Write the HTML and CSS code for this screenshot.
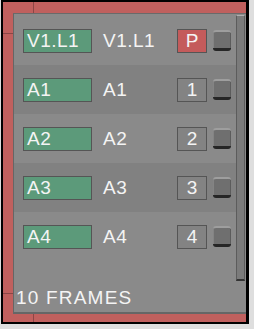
FILE: index.html
```html
<!DOCTYPE html>
<html>
<head>
	<meta charset="utf-8">
	<title>Frames</title>
	<link rel="stylesheet" href="styles.css">
</head>
<body>

<div class="frame">
	<div class="panel">
		<div class="list">
			<div class="row odd">
				<span class="tag">V1.L1</span>
				<span class="name">V1.L1</span>
				<span class="num red">P</span>
				<span class="btn"></span>
			</div>
			<div class="row">
				<span class="tag">A1</span>
				<span class="name">A1</span>
				<span class="num">1</span>
				<span class="btn"></span>
			</div>
			<div class="row odd">
				<span class="tag">A2</span>
				<span class="name">A2</span>
				<span class="num">2</span>
				<span class="btn"></span>
			</div>
			<div class="row">
				<span class="tag">A3</span>
				<span class="name">A3</span>
				<span class="num">3</span>
				<span class="btn"></span>
			</div>
			<div class="row odd">
				<span class="tag">A4</span>
				<span class="name">A4</span>
				<span class="num">4</span>
				<span class="btn"></span>
			</div>
			<div class="foot">10 FRAMES</div>
		</div>
		<div class="scroll">
			<div class="thumb"></div>
		</div>
	</div>
</div>

</body>
</html>
```

FILE: styles.css
```css
html,body{
	height:100%;
}
body{
	margin:0; background:#dedede;
	font-family:"Liberation Sans", Arial, sans-serif; font-size:19px; color:#f4f4f4;
}

/*外框*/
.frame{
	width:233px; height:301px; margin-left:1px;
	padding:11px 0 8px 10px;
	border:solid #000; border-width:2px 3px 2px 2px;
	background:
		linear-gradient(#8c4646,#8c4646) 30px 0/1px 100% no-repeat,
		linear-gradient(#8c4646,#8c4646) 0 31px/100% 1px no-repeat,
		linear-gradient(#8c4646,#8c4646) 0 291px/100% 1px no-repeat,
		#c0605e;
}

/*面板*/
.panel{
	display:flex; box-sizing:border-box; height:301px;
	background:#8a8a8a;
	border-left:1px solid #666; border-top:1px solid #6a6a6a; border-bottom:2px solid #666;
}
.list{
	flex:1; padding-top:2px;
	display:flex; flex-direction:column;
}

/*行*/
.row{
	height:49px; padding-left:9px; padding-right:5px;
	display:flex; align-items:center;
	background:#818181;
}
.row.odd{
	background:#8a8a8a;
}
.tag{
	width:69px; height:24px; box-sizing:border-box; padding-left:3px;
	background:#5c9a7a; border:1px solid #555;
	line-height:22px; letter-spacing:0.5px;
}
.name{
	width:74px; margin-left:11px;
	line-height:24px; letter-spacing:0.5px;
}
.num{
	width:30px; height:24px; box-sizing:border-box;
	border:1px solid #555; background:#838383;
	line-height:22px; text-align:center;
}
.num.red{
	background:#c45b5b;
}
.btn{
	width:18px; height:21px; margin-left:6px; box-sizing:border-box;
	background:#6f6f6f; border-radius:3px;
	border-top:2px solid #9e9e9e; border-bottom:3px solid #262626;
	box-shadow:inset 1px 0 #848484, inset -1px 0 #5c5c5c;
}

/*底部*/
.foot{
	flex:1; padding:0 0 5px 2px;
	display:flex; align-items:flex-end;
	line-height:19px; letter-spacing:1.2px;
}

/*滚动条*/
.scroll{
	width:9px; padding:1px 1px 0 0;
}
.thumb{
	height:266px; box-sizing:border-box;
	background:#7b7b7b;
	border:1px solid #5c5c5c; border-top-color:#b0b0b0; border-bottom:2px solid #333;
}
```
